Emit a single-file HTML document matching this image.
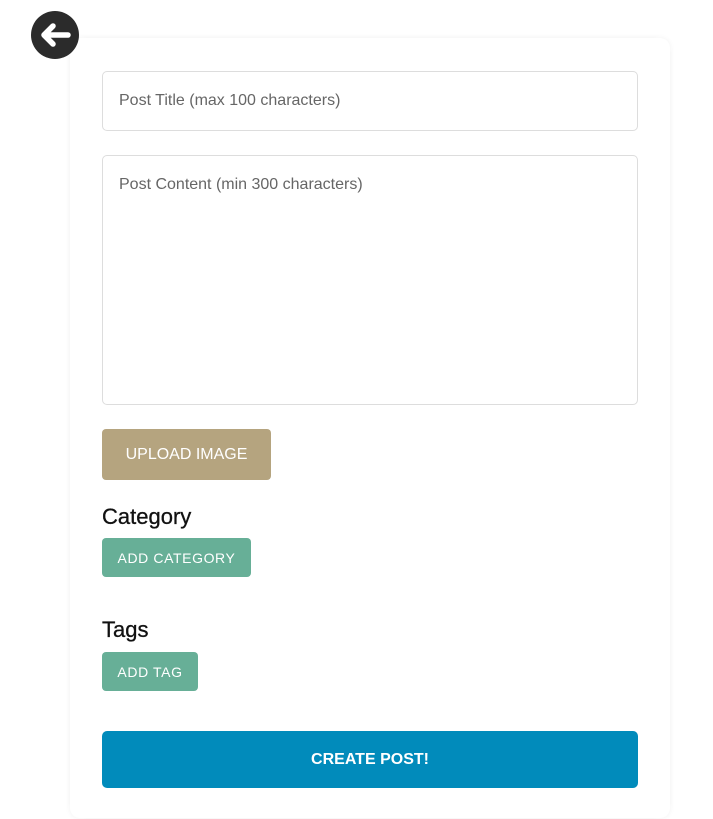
<!DOCTYPE html>
<html><head><style>
html,body{margin:0;height:819px;overflow:hidden}
body{background:#fff;font-family:"Liberation Sans",sans-serif;width:713px;position:relative}
.card{position:absolute;left:70px;top:38px;width:600px;height:780px;background:#fff;border-radius:10px;box-shadow:0 0 6px rgba(0,0,0,0.06)}
.a{position:absolute;box-sizing:border-box}
.inp{border:1px solid #ddd;border-radius:5px;color:#666;font-size:16px;padding-left:16px}
.btn{color:#fff;border-radius:4px;display:flex;align-items:center;justify-content:center}
h3{position:absolute;margin:0;font-weight:500;font-size:22px;color:#111;-webkit-text-stroke:0.3px #111}
</style></head><body>
<div class="card"></div>
<svg class="a" style="left:31px;top:11px" width="48" height="48" viewBox="0 0 48 48"><circle cx="24" cy="24" r="24" fill="#2b2b2b"/><path d="M37 24H13M22 15L13 24L22 33" stroke="#fff" stroke-width="5.5" stroke-linecap="round" stroke-linejoin="round" fill="none"/></svg>
<div class="a inp" style="left:102px;top:71px;width:536px;height:60px;line-height:58px">Post Title (max 100 characters)</div>
<div class="a inp" style="left:102px;top:155px;width:536px;height:250px;padding-top:20px">Post Content (min 300 characters)</div>
<div class="a btn" style="left:102px;top:429px;width:169px;height:51px;background:#b5a47f;font-size:16px">UPLOAD IMAGE</div>
<h3 style="left:102px;top:504px">Category</h3>
<div class="a btn" style="left:102px;top:538px;width:149px;height:39px;background:#67af97;font-size:14px;letter-spacing:0.6px">ADD CATEGORY</div>
<h3 style="left:102px;top:617px">Tags</h3>
<div class="a btn" style="left:102px;top:652px;width:96px;height:39px;background:#67af97;font-size:14px;letter-spacing:0.6px">ADD TAG</div>
<div class="a btn" style="left:102px;top:731px;width:536px;height:57px;background:#018bbb;font-size:16px;font-weight:bold;border-radius:5px">CREATE POST!</div>
</body></html>
